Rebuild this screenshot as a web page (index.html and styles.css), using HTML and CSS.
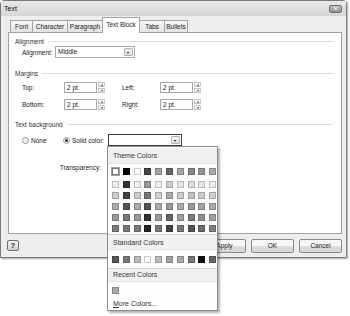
FILE: index.html
```html
<!DOCTYPE html>
<html lang="en">
  <head>
    <meta charset="utf-8">
    <title>Text</title>
    <link rel="stylesheet" href="styles.css">
  </head>
  <body>
    <div class="dialog">
      <div class="titlebar">
        <span class="title">Text</span>
        <span class="close">&times;</span>
      </div>
      <div class="body">
        <div class="tabs">
          <div class="tab w-font">Font</div>
          <div class="tab w-char">Character</div>
          <div class="tab w-para">Paragraph</div>
          <div class="tab w-block active">Text Block</div>
          <div class="tab w-tabs">Tabs</div>
          <div class="tab w-bull">Bullets</div>
        </div>
        <div class="panel">
          <div class="group"><span>Alignment</span></div>
          <div class="row">
            <span class="label w-align">Alignment:</span>
            <div class="select align-select"><span class="value">Middle</span><span class="drop"></span></div>
          </div>

          <div class="group gap-margins"><span>Margins</span></div>
          <div class="margins">
            <span class="label">Top:</span>
            <div class="field"><span class="input">2 pt.</span><span class="spin"><i class="up"></i><i class="down"></i></span></div>
            <span class="label">Left:</span>
            <div class="field"><span class="input">2 pt.</span><span class="spin"><i class="up"></i><i class="down"></i></span></div>
            <span class="label">Bottom:</span>
            <div class="field"><span class="input">2 pt.</span><span class="spin"><i class="up"></i><i class="down"></i></span></div>
            <span class="label">Right:</span>
            <div class="field"><span class="input">2 pt.</span><span class="spin"><i class="up"></i><i class="down"></i></span></div>
          </div>

          <div class="group gap-bg"><span>Text background</span></div>
          <div class="row radios">
            <div class="radio-item first"><span class="radio"></span><span>None</span></div>
            <div class="radio-item second"><span class="radio checked"></span><span>Solid color:</span></div>
            <div class="select color-select"><span class="value"></span><span class="drop"></span></div>
          </div>
          <div class="row transp"><span class="label w-transp">Transparency:</span></div>
        </div>
        <div class="footer">
          <div class="help">?</div>
          <div class="buttons">
            <div class="btn">Apply</div>
            <div class="btn">OK</div>
            <div class="btn">Cancel</div>
          </div>
        </div>
      </div>
    </div>

    <div class="palette">
      <div class="pal-head first-head">Theme Colors</div>
      <div class="swatches base">
        <span class="sw selected" style="background:#fff"></span>
        <span class="sw" style="background:#000"></span>
        <span class="sw" style="background:#fff"></span>
        <span class="sw" style="background:#444"></span>
        <span class="sw" style="background:#a2a2a2"></span>
        <span class="sw" style="background:#666"></span>
        <span class="sw" style="background:#a6a6a6"></span>
        <span class="sw" style="background:#888"></span>
        <span class="sw" style="background:#959595"></span>
        <span class="sw" style="background:#aaa"></span>
      </div>
      <div class="swatches tints">
        <span class="sw" style="background:#eee"></span>
        <span class="sw" style="background:#333"></span>
        <span class="sw" style="background:#eee"></span>
        <span class="sw" style="background:#999"></span>
        <span class="sw" style="background:#eee"></span>
        <span class="sw" style="background:#ccc"></span>
        <span class="sw" style="background:#e6e6e6"></span>
        <span class="sw" style="background:#ddd"></span>
        <span class="sw" style="background:#e6e6e6"></span>
        <span class="sw" style="background:#eee"></span>

        <span class="sw" style="background:#ccc"></span>
        <span class="sw" style="background:#444"></span>
        <span class="sw" style="background:#ccc"></span>
        <span class="sw" style="background:#777"></span>
        <span class="sw" style="background:#d0d0d0"></span>
        <span class="sw" style="background:#aaa"></span>
        <span class="sw" style="background:#ccc"></span>
        <span class="sw" style="background:#c2c2c2"></span>
        <span class="sw" style="background:#ccc"></span>
        <span class="sw" style="background:#d0d0d0"></span>

        <span class="sw" style="background:#aaa"></span>
        <span class="sw" style="background:#555"></span>
        <span class="sw" style="background:#aaa"></span>
        <span class="sw" style="background:#555"></span>
        <span class="sw" style="background:#aaa"></span>
        <span class="sw" style="background:#999"></span>
        <span class="sw" style="background:#aaa"></span>
        <span class="sw" style="background:#9a9a9a"></span>
        <span class="sw" style="background:#a2a2a2"></span>
        <span class="sw" style="background:#aaa"></span>

        <span class="sw" style="background:#999"></span>
        <span class="sw" style="background:#777"></span>
        <span class="sw" style="background:#999"></span>
        <span class="sw" style="background:#333"></span>
        <span class="sw" style="background:#999"></span>
        <span class="sw" style="background:#666"></span>
        <span class="sw" style="background:#9e9e9e"></span>
        <span class="sw" style="background:#7a7a7a"></span>
        <span class="sw" style="background:#8e8e8e"></span>
        <span class="sw" style="background:#a0a0a0"></span>

        <span class="sw" style="background:#7a7a7a"></span>
        <span class="sw" style="background:#777"></span>
        <span class="sw" style="background:#7a7a7a"></span>
        <span class="sw" style="background:#222"></span>
        <span class="sw" style="background:#777"></span>
        <span class="sw" style="background:#444"></span>
        <span class="sw" style="background:#777"></span>
        <span class="sw" style="background:#555"></span>
        <span class="sw" style="background:#6a6a6a"></span>
        <span class="sw" style="background:#808080"></span>
      </div>
      <div class="pal-head">Standard Colors</div>
      <div class="swatches standard">
        <span class="sw" style="background:#555"></span>
        <span class="sw" style="background:#777"></span>
        <span class="sw" style="background:#bbb"></span>
        <span class="sw" style="background:#fff"></span>
        <span class="sw" style="background:#bbb"></span>
        <span class="sw" style="background:#a0a0a0"></span>
        <span class="sw" style="background:#aaa"></span>
        <span class="sw" style="background:#777"></span>
        <span class="sw" style="background:#111"></span>
        <span class="sw" style="background:#666"></span>
      </div>
      <div class="pal-head small-head">Recent Colors</div>
      <div class="swatches recent">
        <span class="sw" style="background:#aaa"></span>
      </div>
      <div class="more"><u>M</u>ore Colors...</div>
    </div>
  </body>
</html>
```

FILE: styles.css
```css
* {
  box-sizing: border-box;
}

body {
  margin: 0;
  width: 350px;
  height: 316px;
  overflow: hidden;
  position: relative;
  background: #fff;
  font-family: "Liberation Sans", Arial, sans-serif;
  font-size: 6.5px;
  color: #222;
}

/* dialog frame */
.dialog {
  width: 347px;
  height: 258px;
  display: flex;
  flex-direction: column;
  border: 1px solid #7a7a7a;
  border-radius: 4px 4px 0 0;
  background: #ededed;
  box-shadow: 1px 1px 2px rgba(0, 0, 0, .35);
}
.titlebar {
  height: 15px;
  display: flex;
  align-items: center;
  justify-content: space-between;
  padding: 0 4px 0 3px;
  background: linear-gradient(#e8e8e8, #d6d6d6);
  font-size: 7px;
  color: #111;
}
.close {
  width: 13px;
  height: 8px;
  border: 1px solid #6c6c6c;
  border-radius: 2px;
  background: linear-gradient(#c4c4c4, #8e8e8e);
  color: #fff;
  font-size: 7px;
  line-height: 6px;
  text-align: center;
}
.body {
  flex: 1;
  display: flex;
  flex-direction: column;
  padding: 1px 4px 0 7px;
}

/* tabs */
.tabs {
  height: 16px;
  display: flex;
  align-items: flex-end;
  padding-left: 2px;
  margin-bottom: -1px;
  position: relative;
  z-index: 1;
}
.tab {
  height: 12px;
  margin-bottom: 1px;
  margin-right: -1px;
  border: 1px solid #a4a4a4;
  border-bottom: none;
  background: linear-gradient(#f7f7f7, #e3e3e3);
  text-align: center;
  line-height: 11px;
}
.tab.active {
  height: 16px;
  margin-bottom: 0;
  background: #fff;
  line-height: 13px;
}
.w-font { width: 23px; }
.w-char { width: 36px; }
.w-para { width: 36px; }
.w-block { width: 38px; }
.w-tabs { width: 26px; }
.w-bull { width: 24px; }

.panel {
  height: 202px;
  background: #fff;
  border: 1px solid #a0a0a0;
  padding: 4px 8px 0 6px;
}

/* group headings with rule */
.group {
  height: 9px;
  display: flex;
  align-items: center;
  gap: 4px;
  color: #333;
}
.group::after {
  content: "";
  flex: 1;
  border-top: 1px solid #dedede;
}
.gap-margins { margin-top: 11px; }
.gap-bg { margin-top: 10px; }

.row {
  height: 12px;
  display: flex;
  align-items: center;
  margin-left: 7px;
}
.w-align { width: 33px; }

.select {
  height: 12px;
  display: flex;
  border: 1px solid #a8a8a8;
  background: #fff;
}
.select .value {
  flex: 1;
  padding-left: 2px;
  line-height: 10px;
}
.select .drop {
  width: 9px;
  margin: 1px;
  border: 1px solid #b4b4b4;
  border-radius: 1px;
  background: linear-gradient(#f6f6f6, #dcdcdc);
  position: relative;
}
.select .drop::after {
  content: "";
  position: absolute;
  left: 2px;
  top: 3px;
  border-left: 1.5px solid transparent;
  border-right: 1.5px solid transparent;
  border-top: 2px solid #111;
}
.align-select { width: 80px; }
.color-select {
  width: 74px;
  border-color: #3c3c3c;
}

/* margin fields */
.margins {
  display: grid;
  grid-template-columns: 25px 41px 21px 41px;
  grid-auto-rows: 11px;
  column-gap: 17px;
  row-gap: 6px;
  margin: 4px 0 0 7px;
  align-items: center;
}
.field {
  height: 11px;
  display: flex;
}
.input {
  flex: 1;
  border: 1px solid #a8a8a8;
  padding-left: 2px;
  line-height: 9px;
}
.spin {
  width: 8px;
  display: flex;
  flex-direction: column;
  gap: 1px;
  padding: 0 0 0 1px;
}
.spin i {
  flex: 1;
  border: 1px solid #c4c4c4;
  background: linear-gradient(#fafafa, #e6e6e6);
  position: relative;
}
.spin i::after {
  content: "";
  position: absolute;
  left: 1.5px;
  top: 1px;
  border-left: 1.5px solid transparent;
  border-right: 1.5px solid transparent;
}
.spin .up::after { border-bottom: 2px solid #555; }
.spin .down::after { border-top: 2px solid #555; }

/* radios */
.radios { margin-top: 5px; }
.radio-item {
  display: flex;
  align-items: center;
  gap: 2px;
}
.radio-item.first { width: 41px; }
.radio-item.second { width: 45px; }
.radio {
  width: 7px;
  height: 7px;
  border: 1px solid #9a9a9a;
  border-radius: 50%;
  background: linear-gradient(#e6e6e6, #fafafa);
  position: relative;
}
.radio.checked::after {
  content: "";
  position: absolute;
  left: 1px;
  top: 1px;
  width: 3px;
  height: 3px;
  border-radius: 50%;
  background: #333;
}

.transp {
  margin: 16px 0 0;
  height: 10px;
}
.w-transp {
  width: 86px;
  text-align: right;
}

/* footer */
.footer {
  flex: 1;
  display: flex;
  align-items: center;
  justify-content: space-between;
}
.help {
  width: 12px;
  height: 11px;
  margin-left: -1px;
  border: 1px solid #707070;
  border-radius: 2px;
  background: linear-gradient(#f4f4f4, #d0d0d0);
  font-size: 7px;
  font-weight: bold;
  line-height: 9px;
  text-align: center;
}
.buttons {
  display: flex;
  gap: 5px;
}
.btn {
  width: 43px;
  height: 14px;
  border: 1px solid #8a8a8a;
  border-radius: 2px;
  background: linear-gradient(#f6f6f6 50%, #dedede 50%, #d6d6d6);
  text-align: center;
  line-height: 12px;
}

/* color palette dropdown */
.palette {
  position: absolute;
  left: 107px;
  top: 146px;
  width: 111px;
  height: 165px;
  border: 1px solid #8c8c8c;
  background: #fdfdfd;
  box-shadow: 2px 2px 2px rgba(0, 0, 0, .3);
  font-size: 7px;
  color: #333;
  z-index: 2;
}
.pal-head {
  height: 16px;
  line-height: 15px;
  padding-left: 5px;
  background: #f1f1f1;
  border-top: 1px solid #d4d4d4;
  border-bottom: 1px solid #e4e4e4;
}
.first-head {
  margin-top: 1px;
  border-top: none;
}
.small-head {
  height: 14px;
  line-height: 12px;
  margin-top: 5px;
}
.swatches {
  display: grid;
  grid-template-columns: repeat(10, 7px);
  grid-auto-rows: 7px;
  column-gap: 3.8px;
  row-gap: 4px;
  margin-left: 4px;
}
.base { margin-top: 4px; }
.tints { margin-top: 6px; margin-bottom: 2px; }
.standard { margin-top: 6px; }
.recent { margin-top: 5px; }
.sw {
  border: 1px solid rgba(0, 0, 0, .2);
}
.sw.selected {
  outline: 1px solid #a0a0a0;
  border-color: #777;
}
.more {
  margin: 4px 0 0 5px;
  height: 11px;
  line-height: 11px;
}
```
